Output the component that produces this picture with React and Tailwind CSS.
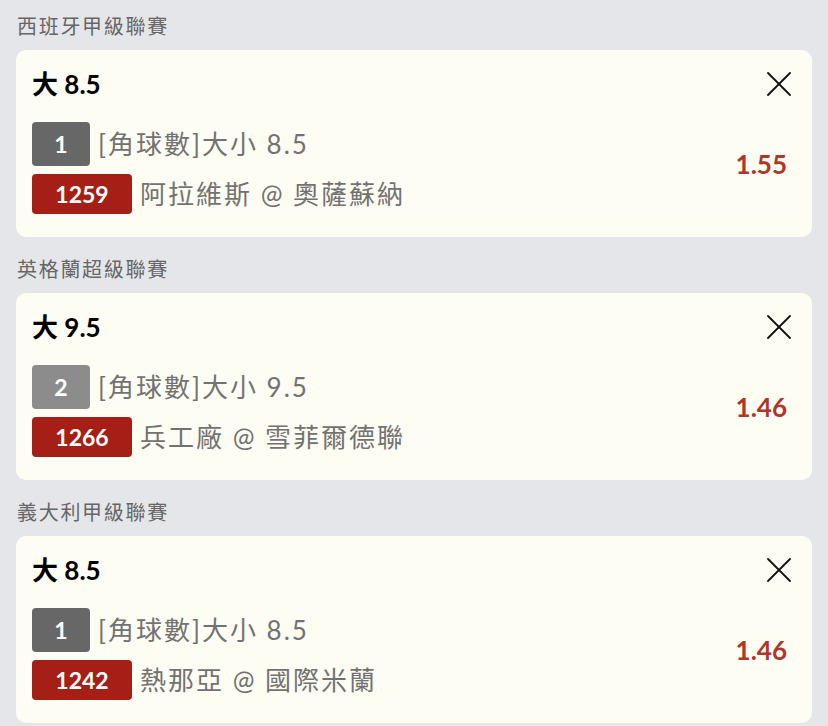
const bets = [
  {
    league: '西班牙甲級聯賽',
    pick: '大 8.5',
    num: '1',
    numMuted: false,
    market: '[角球數]大小 8.5',
    code: '1259',
    match: '阿拉維斯 @ 奧薩蘇納',
    odds: '1.55',
  },
  {
    league: '英格蘭超級聯賽',
    pick: '大 9.5',
    num: '2',
    numMuted: true,
    market: '[角球數]大小 9.5',
    code: '1266',
    match: '兵工廠 @ 雪菲爾德聯',
    odds: '1.46',
  },
  {
    league: '義大利甲級聯賽',
    pick: '大 8.5',
    num: '1',
    numMuted: false,
    market: '[角球數]大小 8.5',
    code: '1242',
    match: '熱那亞 @ 國際米蘭',
    odds: '1.46',
  },
];

function CloseIcon() {
  return (
    <svg width="24" height="24" viewBox="0 0 24 24" fill="none" stroke="#111" strokeWidth="1.8" strokeLinecap="round">
      <line x1="1" y1="1" x2="23" y2="23" />
      <line x1="23" y1="1" x2="1" y2="23" />
    </svg>
  );
}

function BetCard({ bet }) {
  return (
    <div className="flex flex-col">
      <div className="text-[20px] leading-[28px] tracking-[1.7px] text-[#666] mb-[10px] pl-px">{bet.league}</div>
      <div className="bg-[#fdfdf4] rounded-[10px] pt-[18px] pb-[23px] pl-4 pr-[21px]">
        {/* 標題 + 關閉 */}
        <div className="flex items-center justify-between">
          <div className="text-[26px] leading-[32px] font-bold text-black">{bet.pick}</div>
          <button className="flex items-center justify-center">
            <CloseIcon />
          </button>
        </div>

        <div className="flex items-center justify-between mt-[22px]">
          <div className="flex flex-col gap-2">
            <div className="flex items-center gap-2">
              <span
                className={`w-[58px] h-[44px] rounded-[4px] flex items-center justify-center text-white text-[23px] font-bold ${
                  bet.numMuted ? 'bg-[#8c8c8c]' : 'bg-[#676767]'
                }`}
              >
                {bet.num}
              </span>
              <span className="text-[26px] leading-[32px] tracking-[2px] text-[#727272]">{bet.market}</span>
            </div>
            <div className="flex items-center gap-2">
              <span className="w-[100px] h-[40px] rounded-[4px] bg-[#a61f17] flex items-center justify-center text-white text-[23px] font-bold">
                {bet.code}
              </span>
              <span className="text-[26px] leading-[32px] tracking-[2px] text-[#727272]">{bet.match}</span>
            </div>
          </div>
          <div className="text-[26px] leading-[32px] font-bold text-[#b0362a] mr-[4px] mb-[8px]">{bet.odds}</div>
        </div>
      </div>
    </div>
  );
}

export default function App() {
  return (
    <div
      className="min-h-screen bg-[#e5e6ea] px-4 pt-[12px] pb-1 flex flex-col gap-[18px]"
      style={{ fontFamily: 'Lato, "Noto Sans CJK TC", sans-serif' }}
    >
      {bets.map((bet, i) => (
        <BetCard key={i} bet={bet} />
      ))}
    </div>
  );
}
